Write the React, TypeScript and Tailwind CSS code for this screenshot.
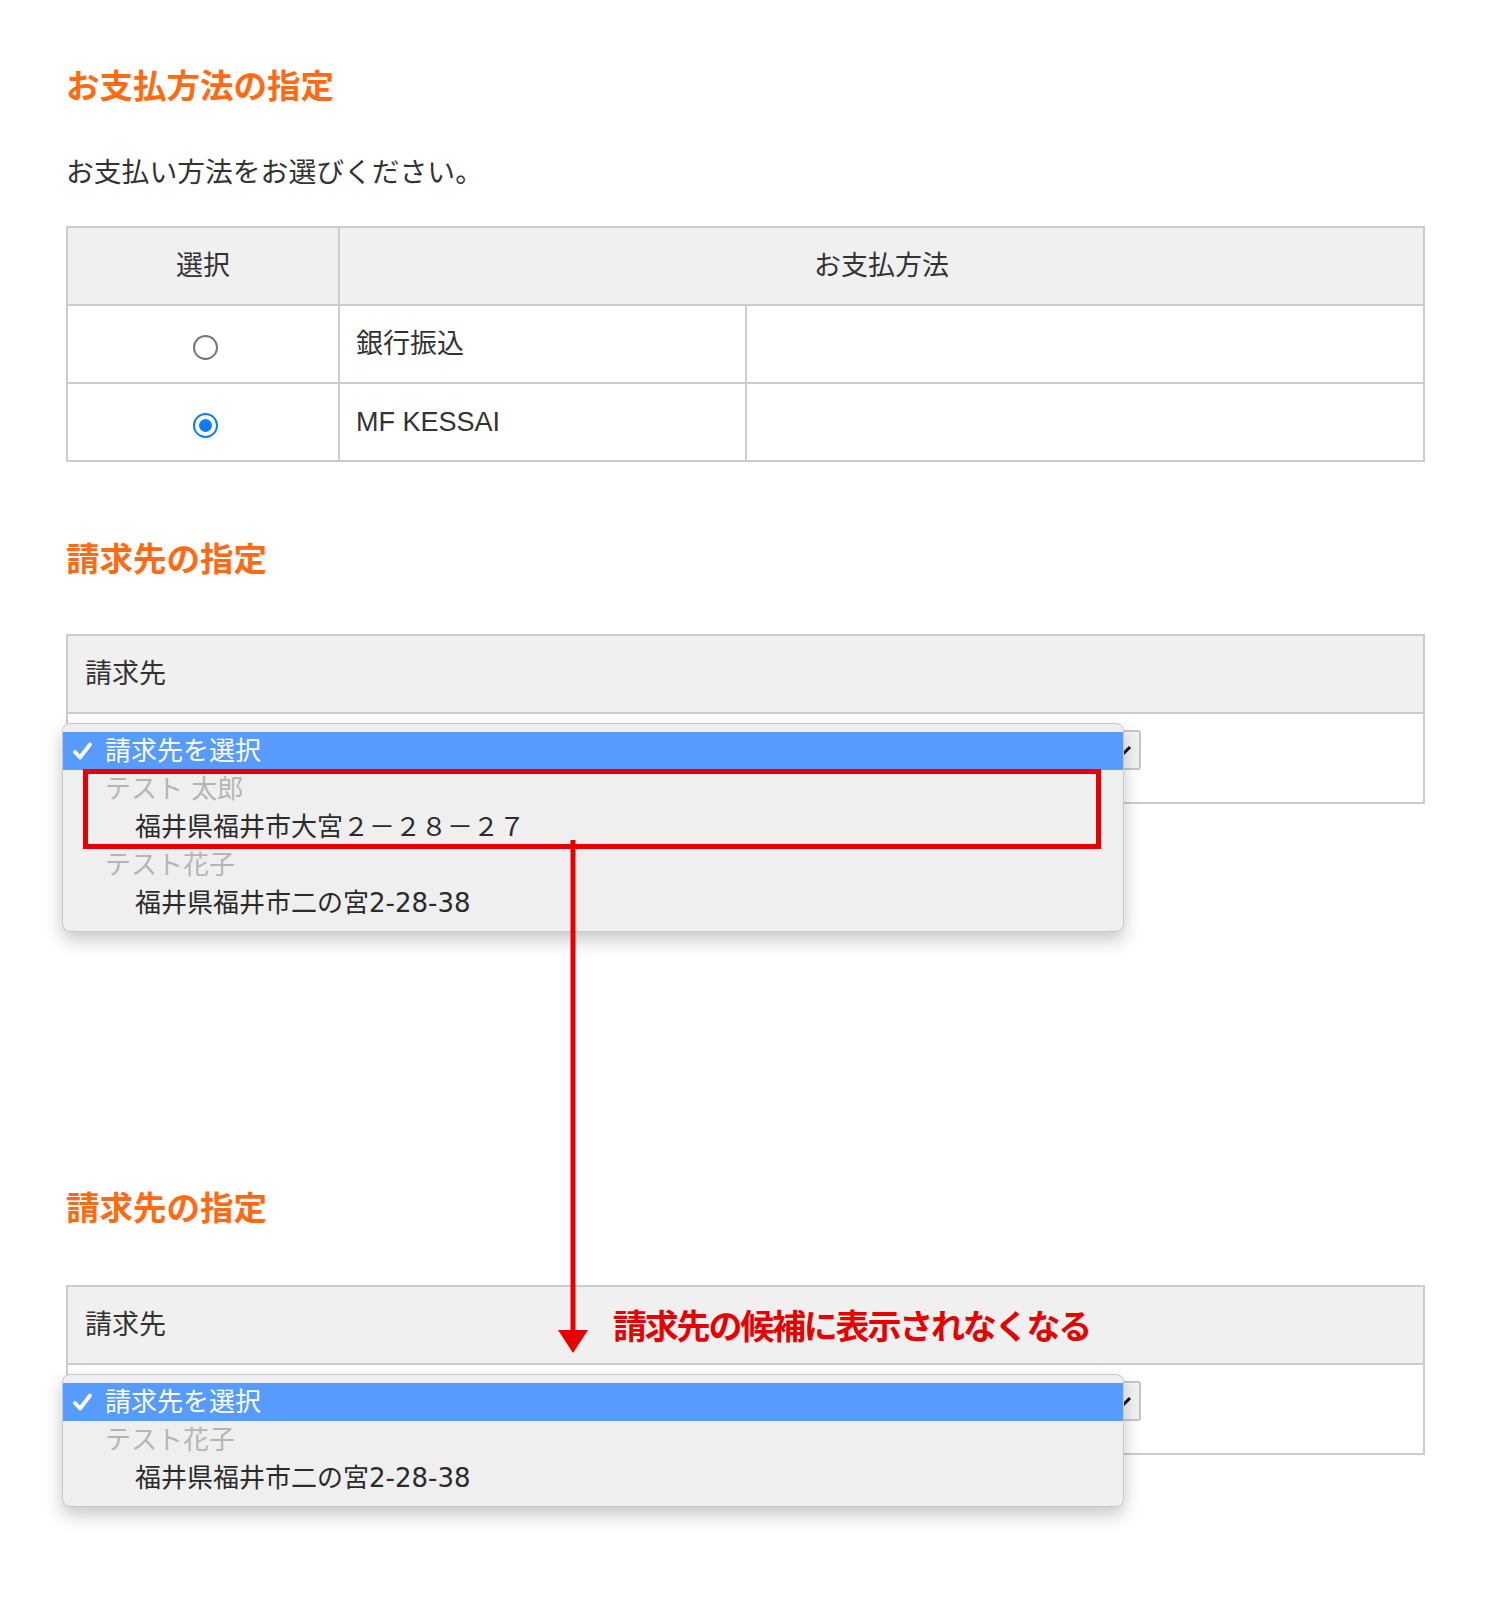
import React from "react";

type Billing = {
  name: string;
  address: string;
};

const methods = [
  { id: "bank", label: "銀行振込", checked: false },
  { id: "mf", label: "MF KESSAI", checked: true },
];

const before: Billing[] = [
  { name: "テスト 太郎", address: "福井県福井市大宮２－２８－２７" },
  { name: "テスト花子", address: "福井県福井市二の宮2-28-38" },
];

const after: Billing[] = [{ name: "テスト花子", address: "福井県福井市二の宮2-28-38" }];

function Radio({ checked }: { checked: boolean }) {
  if (!checked) {
    return (
      <span className="ml-[5px] mt-[4px] inline-block h-[25px] w-[25px] rounded-full border-2 border-[#767676] bg-white align-middle" />
    );
  }
  return (
    <span className="ml-[5px] mt-[4px] inline-flex h-[25px] w-[25px] items-center justify-center rounded-full border-[2.5px] border-[#0f7bff] bg-white align-middle">
      <span className="h-[13px] w-[13px] rounded-full bg-[#0f7bff]" />
    </span>
  );
}

function SectionTitle({ children, className }: { children: React.ReactNode; className?: string }) {
  return (
    <h2
      className={`font-['Noto_Sans_CJK_JP',sans-serif] text-[33.5px] font-bold leading-[40px] text-[#ff6a13] ${className ?? ""}`}
    >
      {children}
    </h2>
  );
}

function Menu({ items }: { items: Billing[] }) {
  return (
    <div className="absolute left-[-6px] top-[9px] z-10 w-[1062px] overflow-hidden rounded-[8px] border border-[#c8c8c8] bg-[#efefef] pb-[9px] pt-[8px] font-['DejaVu_Sans','Noto_Sans_CJK_JP',sans-serif] shadow-[0_8px_18px_rgba(0,0,0,0.22)]">
      <div className="flex h-[38px] items-center bg-[#579bff] text-[26px] text-white">
        <svg width="22" height="18" viewBox="0 0 22 18" className="ml-[9px] mr-[11px]">
          <path d="M3 10 L8 15.5 L18 2.5" fill="none" stroke="white" strokeWidth="3.8" strokeLinecap="round" strokeLinejoin="round" />
        </svg>
        請求先を選択
      </div>
      {items.map((b) => (
        <React.Fragment key={b.name}>
          <div className="flex h-[38px] items-center pl-[42px] text-[26px] text-[#b5b5b5]">{b.name}</div>
          <div className="flex h-[38px] items-center pl-[72px] text-[26px] text-[#2b2b2b]">{b.address}</div>
        </React.Fragment>
      ))}
    </div>
  );
}

function BillingTable({
  items,
  annotation,
  boxed,
}: {
  items: Billing[];
  annotation?: string;
  boxed?: boolean;
}) {
  return (
    <div className="w-[1359px] border-2 border-[#cccccc]">
      <div className="relative flex h-[78px] items-center border-b-2 border-[#cccccc] bg-[#f0f0f0] pl-[17px] text-[27px] text-[#333]">
        請求先
        {annotation && (
          <span className="absolute left-[545px] top-1/2 -translate-y-1/2 whitespace-nowrap font-['Noto_Sans_CJK_JP',sans-serif] text-[34px] font-bold leading-none tracking-[-2.2px] text-[#e60000]">
            {annotation}
          </span>
        )}
      </div>
      <div className="relative h-[88px] bg-white pl-[17px] pt-[16px]">
        <div className="relative h-[40px] w-[1056px] rounded-[3px] border-2 border-[#c6c6c6] bg-[#f2f2f2]">
          <svg width="24" height="14" viewBox="0 0 24 14" className="absolute right-[7px] top-[13px]">
            <path d="M2 2 L12 12 L22 2" fill="none" stroke="#111" strokeWidth="3" />
          </svg>
        </div>
        <Menu items={items} />
        {boxed && (
          <div className="absolute left-[15px] top-[55px] z-20 h-[80px] w-[1018px] border-[5px] border-[#e60000]" />
        )}
      </div>
    </div>
  );
}

export default function App() {
  return (
    <div className="relative min-h-[1600px] bg-white pl-[66px] pt-[64px] font-['Liberation_Sans','Noto_Sans_CJK_JP',sans-serif] text-[#333]">
      <SectionTitle>お支払方法の指定</SectionTitle>
      <p className="mt-[49px] text-[27.8px] leading-[40px] text-[#333]">お支払い方法をお選びください。</p>

      <table className="mt-[33px] w-[1359px] border-collapse text-[27px] text-[#333]">
        <thead>
          <tr className="bg-[#f0f0f0]">
            <th className="h-[78px] w-[272px] border-2 border-[#cccccc] font-normal">選択</th>
            <th colSpan={2} className="border-2 border-[#cccccc] font-normal">
              お支払方法
            </th>
          </tr>
        </thead>
        <tbody>
          {methods.map((m) => (
            <tr key={m.id}>
              <td className="h-[78px] border-2 border-[#cccccc] text-center">
                <Radio checked={m.checked} />
              </td>
              <td className="w-[407px] border-2 border-[#cccccc] pl-[16px]">{m.label}</td>
              <td className="border-2 border-[#cccccc]" />
            </tr>
          ))}
        </tbody>
      </table>

      <SectionTitle className="mt-[75px]">請求先の指定</SectionTitle>
      <div className="mt-[57px]">
        <BillingTable items={before} boxed />
      </div>

      <SectionTitle className="mt-[382px]">請求先の指定</SectionTitle>
      <div className="mt-[59px]">
        <BillingTable items={after} annotation="請求先の候補に表示されなくなる" />
      </div>

      {/* arrow from the boxed entry down to the second table */}
      <svg width="30" height="515" viewBox="0 0 30 515" className="absolute left-[558px] top-[840px] z-30">
        <line x1="15" y1="0" x2="15" y2="492" stroke="#e60000" strokeWidth="5" />
        <polygon points="0,490 30,490 15,513" fill="#e60000" />
      </svg>
    </div>
  );
}
